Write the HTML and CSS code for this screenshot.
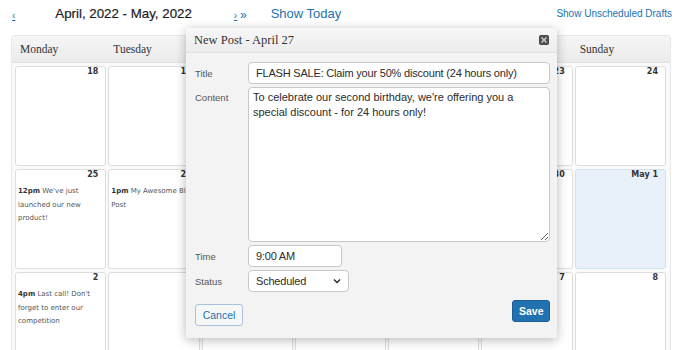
FILE: index.html
```html
<!DOCTYPE html>
<html lang="en">
<head>
  <meta charset="UTF-8">
  <meta name="viewport" content="width=device-width, initial-scale=1.0">
  <title>Editorial Calendar</title>
  <link rel="stylesheet" href="styles.css">
</head>
<body>
  <!-- Navigation bar -->
  <div class="toolbar">
    <a class="nav-link prev" href="#">‹</a>
    <div class="range">April, 2022 - May, 2022</div>
    <div class="nav-next"><a class="nav-link" href="#">›</a> <span class="jump">»</span></div>
    <a class="today" href="#">Show Today</a>
    <a class="drafts" href="#">Show Unscheduled Drafts</a>
  </div>

  <!-- Calendar -->
  <div class="calendar">
    <div class="cal-head">
      <div class="weekday">Monday</div>
      <div class="weekday">Tuesday</div>
      <div class="weekday">Wednesday</div>
      <div class="weekday">Thursday</div>
      <div class="weekday">Friday</div>
      <div class="weekday">Saturday</div>
      <div class="weekday">Sunday</div>
    </div>
    <div class="cal-grid">
      <div class="day"><div class="day-num">18</div></div>
      <div class="day"><div class="day-num">19</div></div>
      <div class="day"><div class="day-num">20</div></div>
      <div class="day"><div class="day-num">21</div></div>
      <div class="day"><div class="day-num">22</div></div>
      <div class="day"><div class="day-num">23</div></div>
      <div class="day"><div class="day-num">24</div></div>

      <div class="day">
        <div class="day-num">25</div>
        <div class="post"><b>12pm</b> We've just launched our new product!</div>
      </div>
      <div class="day">
        <div class="day-num">26</div>
        <div class="post"><b>1pm</b> My Awesome Blog Post</div>
      </div>
      <div class="day"><div class="day-num">27</div></div>
      <div class="day"><div class="day-num">28</div></div>
      <div class="day"><div class="day-num">29</div></div>
      <div class="day"><div class="day-num">30</div></div>
      <div class="day today-cell"><div class="day-num">May 1</div></div>

      <div class="day">
        <div class="day-num">2</div>
        <div class="post"><b>4pm</b> Last call! Don't forget to enter our competition</div>
      </div>
      <div class="day"><div class="day-num">3</div></div>
      <div class="day"><div class="day-num">4</div></div>
      <div class="day"><div class="day-num">5</div></div>
      <div class="day"><div class="day-num">6</div></div>
      <div class="day"><div class="day-num">7</div></div>
      <div class="day"><div class="day-num">8</div></div>
    </div>
  </div>

  <!-- New post dialog -->
  <div class="dialog">
    <div class="dialog-title">
      <span>New Post - April 27</span>
      <svg class="close" width="10" height="10" viewBox="0 0 10 10">
        <rect x="0.5" y="0.5" width="9" height="9" rx="1" fill="#555" stroke="#444"/>
        <path d="M2.5 2.5 L7.5 7.5 M7.5 2.5 L2.5 7.5" stroke="#cfcfcf" stroke-width="1.3"/>
      </svg>
    </div>
    <div class="dialog-body">
      <div class="form">
        <label class="field-label">Title</label>
        <input class="field" type="text" value="FLASH SALE: Claim your 50% discount (24 hours only)">

        <label class="field-label top">Content</label>
        <textarea class="field content">To celebrate our second birthday, we're offering you a special discount - for 24 hours only!</textarea>

        <label class="field-label">Time</label>
        <input class="field time" type="text" value="9:00 AM">

        <label class="field-label">Status</label>
        <div class="field select">
          <span>Scheduled</span>
          <svg width="8" height="6" viewBox="0 0 8 6">
            <path d="M1 1.5 L4 4.5 L7 1.5" fill="none" stroke="#222" stroke-width="1.3"/>
          </svg>
        </div>
      </div>
      <div class="actions">
        <button class="btn cancel">Cancel</button>
        <button class="btn save">Save</button>
      </div>
    </div>
  </div>
</body>
</html>
```

FILE: styles.css
```css
/* Page */
body {
  margin: 0;
  background: #ffffff;
  font-family: "Liberation Sans", Arial, sans-serif;
  color: #222;
}

/* Navigation bar */
.toolbar {
  display: flex;
  align-items: center;
  height: 26px;
  padding: 0 8px 0 12px;
}
.nav-link {
  color: #2271b1;
  font-size: 10px;
}
.prev {
  margin-top: 4px;
}
.range {
  margin-left: 40px;
  font-size: 13.3px;
  color: #1d1d1d;
  -webkit-text-stroke: 0.2px #1d1d1d;
}
.nav-next {
  margin-left: 42px;
  font-size: 10px;
  color: #2271b1;
  margin-top: 3px;
}
.jump {
  font-size: 12px;
}
.today {
  margin-left: 24px;
  font-size: 13px;
  color: #2271b1;
  text-decoration: none;
}
.drafts {
  margin-left: auto;
  font-size: 10px;
  color: #2271b1;
  text-decoration: none;
}

/* Calendar */
.calendar {
  margin: 9px 9px 0 11px;
  background: #fafafa;
  border: 1px solid #e8e8e8;
  border-radius: 3px;
}
.cal-head,
.cal-grid {
  display: grid;
  grid-template-columns: repeat(7, 1fr);
  column-gap: 2px;
  padding: 0 4px 0 3px;
}
.cal-head {
  height: 26px;
  align-items: center;
  background: linear-gradient(#f6f6f6, #ebebeb);
  border-bottom: 1px solid #e2e2e2;
}
.weekday {
  padding-left: 5px;
  font-family: "Liberation Serif", Georgia, serif;
  font-size: 11.5px;
  color: #333;
}
.cal-grid {
  grid-auto-rows: 100px;
  row-gap: 3px;
  padding-top: 3px;
}
.day {
  background: #ffffff;
  border: 1px solid #dedede;
  border-radius: 3px;
  padding: 0 2px;
  font-family: "DejaVu Sans", Verdana, sans-serif;
}
.today-cell {
  background: #e8f0fa;
  border-color: #d5e1ef;
}
.day-num {
  padding-right: 5px;
  text-align: right;
  font-size: 8px;
  font-weight: bold;
  line-height: 9px;
  color: #333;
}
.post {
  margin-top: 6px;
  font-size: 7px;
  line-height: 13.5px;
  color: #555;
}
.post b {
  color: #333;
}

/* New post dialog */
.dialog {
  position: absolute;
  left: 186px;
  top: 28px;
  width: 371px;
  height: 310px;
  background: #f3f3f3;
  box-shadow: 0 2px 10px rgba(0, 0, 0, 0.28);
  display: flex;
  flex-direction: column;
}
.dialog-title {
  display: flex;
  align-items: center;
  justify-content: space-between;
  height: 24px;
  padding: 0 8px;
  background: linear-gradient(#f7f7f7, #ececec);
  border-bottom: 1px solid #e0e0e0;
  font-family: "Liberation Serif", Georgia, serif;
  font-size: 12.5px;
  color: #333;
}
.dialog-body {
  padding: 9px 7px 12px 9px;
  display: flex;
  flex-direction: column;
  flex: 1;
}
.form {
  display: grid;
  grid-template-columns: 53px 1fr;
  row-gap: 3px;
  align-items: center;
}
.field-label {
  font-size: 9.5px;
  color: #555;
}
.field-label.top {
  align-self: start;
  padding-top: 5px;
}
.field {
  box-sizing: border-box;
  height: 22px;
  margin: 0;
  padding: 0 7px;
  border: 1px solid #c8c8c8;
  border-radius: 4px;
  background: #ffffff;
  font-family: "Liberation Sans", Arial, sans-serif;
  font-size: 11px;
  letter-spacing: -0.2px;
  color: #2c2c2c;
  outline: none;
}
.content {
  height: 155px;
  padding: 2px 4px;
  line-height: 15px;
  letter-spacing: 0;
  resize: both;
}
.time {
  width: 94px;
}
.select {
  width: 101px;
  display: flex;
  align-items: center;
  justify-content: space-between;
}

/* Buttons */
.actions {
  display: flex;
  justify-content: space-between;
  align-items: flex-start;
  margin-top: auto;
}
.btn {
  height: 22px;
  border-radius: 3px;
  font-family: "Liberation Sans", Arial, sans-serif;
  font-size: 10.5px;
  cursor: pointer;
}
.cancel {
  width: 48px;
  margin-top: 4px;
  background: #f6f7f7;
  border: 1px solid #a9c1dd;
  color: #2271b1;
}
.save {
  width: 38px;
  background: #2271b1;
  border: 1px solid #1b5e96;
  color: #ffffff;
  font-weight: bold;
}
```
